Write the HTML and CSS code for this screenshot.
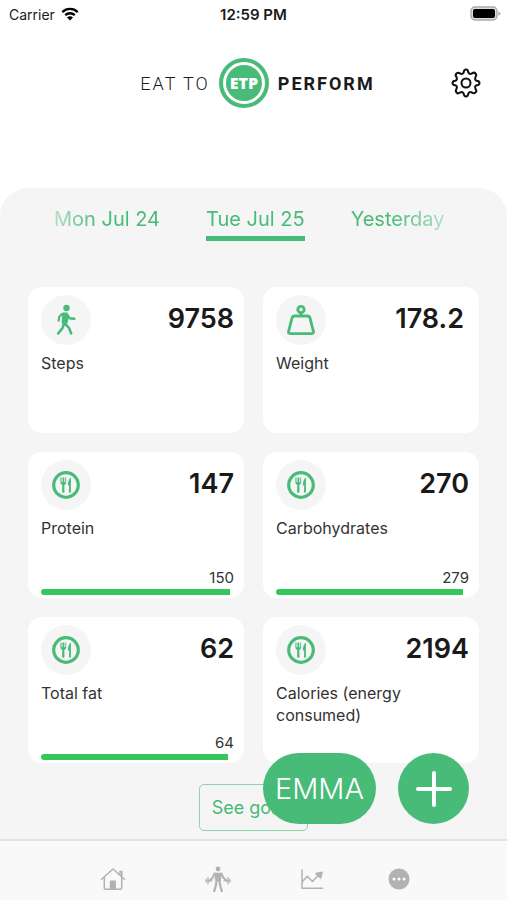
FILE: index.html
```html
<!DOCTYPE html>
<html lang="en">
<head>
<meta charset="utf-8">
<meta name="viewport" content="width=device-width, initial-scale=1">
<title>Eat To Perform</title>
<link rel="stylesheet" href="styles.css">
</head>
<body>
<svg class="sprite" aria-hidden="true">
  <symbol id="meal" viewBox="0 0 28 28">
    <circle cx="14" cy="14" r="12.3" fill="none" stroke="currentColor" stroke-width="3.2"/>
    <path d="M8.400 6.500v5q0 1.800 1.900 2.400L10.100 20.500q0 1.200 1.200 1.200t1.200-1.200l-.2-6.600q1.900-.6 1.900-2.400v-5h-.9v4.700h-1V6.500h-1.800v4.700h-1V6.500z" fill="currentColor"/>
    <path d="M18.900 6.500q-3 2.300-3 7.700l1.300.6-.3 5.700q0 1.200 1 1.200t1-1.200z" fill="currentColor"/>
  </symbol>
</svg>

<div class="status">
  <span class="carrier">Carrier
    <svg width="18" height="14" viewBox="0 0 18 14" aria-hidden="true">
      <path d="M9 13.6 6 10.5a4.2 4.2 0 0 1 6 0z"/>
      <path d="M4.2 8.2a6.9 6.9 0 0 1 9.6 0M1.3 5.1a11 11 0 0 1 15.4 0" fill="none" stroke="#000" stroke-width="2.3"/>
    </svg>
  </span>
  <time class="clock">12:59 PM</time>
  <svg class="battery" width="31" height="16" viewBox="0 0 31 16" aria-hidden="true">
    <rect x="1" y="1" width="26" height="13" rx="4" fill="#ddd" stroke="#aaa" stroke-width="1.4"/>
    <rect x="3" y="3" width="22" height="9" rx="2"/>
    <path d="M28.4 5.4q2 .7 2 2.2t-2 2.2z" fill="#aaa"/>
  </svg>
</div>

<header class="header">
  <h1 class="brand">
    <span class="brand-light">EAT TO</span>
    <span class="brand-ring"><span class="brand-disc">ETP</span></span>
    <span class="brand-bold">PERFORM</span>
  </h1>
  <button class="settings" type="button" aria-label="Settings">
    <svg width="30" height="30" viewBox="0 0 30 30" fill="none" stroke="#111" stroke-width="2" stroke-linejoin="round" aria-hidden="true">
      <circle cx="15" cy="15" r="4.5"/>
      <path d="M12.7 4.3Q13 1.5 15 1.5T17.3 4.3Q18.2 6.7 20.9 5.5Q23.1 3.8 24.5 5.5T24.5 9.1Q23.3 11.8 25.7 12.7Q28.5 13 28.5 15T25.7 17.3Q23.3 18.2 24.5 20.9Q26.2 23.1 24.5 24.5T20.9 24.5Q18.2 23.3 17.3 25.7Q17 28.5 15 28.5T12.7 25.7Q11.8 23.3 9.1 24.5Q6.9 26.2 5.5 24.5T5.5 20.9Q6.7 18.2 4.3 17.3Q1.5 17 1.5 15T4.3 12.7Q6.7 11.8 5.5 9.1Q3.8 6.9 5.5 5.5T9.1 5.5Q11.8 6.7 12.7 4.3Z"/>
    </svg>
  </button>
</header>

<main class="panel">
  <div class="days">
    <button class="day" type="button">Mon Jul 24</button>
    <button class="day day-active" type="button" aria-current="date">Tue Jul 25</button>
    <button class="day" type="button">Yesterday</button>
  </div>

  <div class="cards">
    <section class="card">
      <div class="card-top">
        <span class="badge">
          <svg width="22" height="32" viewBox="0 0 22 32" fill="none" stroke="currentColor" stroke-linecap="round" stroke-linejoin="round" aria-hidden="true">
            <circle cx="11.500" cy="4" r="3.200" fill="currentColor" stroke="none"/>
            <path d="M8.200 9.500h3.800l.5 4.800-.9 4.500H7.700z" fill="currentColor" stroke-width="2"/>
            <path d="M7.200 9.800 4.300 12.800 3.600 16.600" stroke-width="2.200"/>
            <path d="M12.600 11.200 14.600 14.300 19.400 14.800" stroke-width="2.400"/>
            <path d="M8.800 20 7.400 24.200 3.200 29.400M10.500 20 14 24 16.200 29.400" stroke-width="2.600"/>
          </svg>
        </span>
        <strong class="value">9758</strong>
      </div>
      <h2 class="label">Steps</h2>
    </section>

    <section class="card">
      <div class="card-top">
        <span class="badge">
          <svg width="28" height="32" viewBox="0 0 28 32" fill="none" stroke="currentColor" stroke-width="2.8" stroke-linejoin="round" aria-hidden="true">
            <circle cx="14" cy="5.600" r="3.200"/>
            <path d="M14 9v3M7.200 12h13.600q1.700 0 2.100 1.600l3.500 13.800q.5 2.200-1.600 2.200H3.200q-2.100 0-1.600-2.200l3.500-13.800Q5.500 12 7.200 12z"/>
          </svg>
        </span>
        <strong class="value value-decimal">178.2</strong>
      </div>
      <h2 class="label">Weight</h2>
    </section>

    <section class="card">
      <div class="card-top">
        <span class="badge"><svg width="28" height="28" aria-hidden="true"><use href="#meal"/></svg></span>
        <strong class="value">147</strong>
      </div>
      <h2 class="label">Protein</h2>
      <div class="goal">
        <span>150</span>
        <div class="track"><div class="bar" style="width: 98%"></div></div>
      </div>
    </section>

    <section class="card">
      <div class="card-top">
        <span class="badge"><svg width="28" height="28" aria-hidden="true"><use href="#meal"/></svg></span>
        <strong class="value">270</strong>
      </div>
      <h2 class="label">Carbohydrates</h2>
      <div class="goal">
        <span>279</span>
        <div class="track"><div class="bar" style="width: 97%"></div></div>
      </div>
    </section>

    <section class="card">
      <div class="card-top">
        <span class="badge"><svg width="28" height="28" aria-hidden="true"><use href="#meal"/></svg></span>
        <strong class="value">62</strong>
      </div>
      <h2 class="label">Total fat</h2>
      <div class="goal">
        <span>64</span>
        <div class="track"><div class="bar" style="width: 97%"></div></div>
      </div>
    </section>

    <section class="card">
      <div class="card-top">
        <span class="badge"><svg width="28" height="28" aria-hidden="true"><use href="#meal"/></svg></span>
        <strong class="value">2194</strong>
      </div>
      <h2 class="label">Calories (energy consumed)</h2>
    </section>
  </div>

  <button class="goals" type="button">See goals</button>
</main>

<div class="floating">
  <button class="fab fab-wide" type="button">EMMA</button>
  <button class="fab" type="button" aria-label="Add">
    <svg width="38" height="38" viewBox="0 0 38 38" stroke="#fff" stroke-width="4" stroke-linecap="round" aria-hidden="true"><path d="M19 3v32M3 19h32"/></svg>
  </button>
</div>

<nav class="nav">
  <a href="#home" aria-label="Home">
    <svg width="26" height="24" viewBox="0 0 26 24" fill="none" stroke="currentColor" stroke-width="1.5" stroke-linejoin="round" stroke-linecap="round" aria-hidden="true">
      <path d="M1.500 12.200 13 2l11.500 10.200M4.300 10.500V21.300q0 .9.900.9H20.800q.9 0 .9-.9V10.500M20 7.500V4.500h1.800v5"/>
      <path d="M10.500 22v-7.700h4.700V22z" fill="currentColor"/>
    </svg>
  </a>
  <a href="#training" aria-label="Training">
    <svg width="26" height="26" viewBox="0 0 26 26" fill="none" stroke="currentColor" stroke-linecap="round" stroke-linejoin="round" aria-hidden="true">
      <circle cx="13" cy="3" r="2.400" fill="currentColor" stroke="none"/>
      <path d="M10 7.500h6l-.9 7.500h-4.200z" fill="currentColor" stroke-width="1.500"/>
      <path d="M9.500 7.500 7.500 12 4.500 14.500M16.500 7.500 18.500 12 21.500 14.500" stroke-width="2"/>
      <path d="M11.300 16.500 10.600 20.500 9.200 25M14.700 16.500 15.400 20.500 16.800 25" stroke-width="2.300"/>
      <path d="M3 11.500v6.500M1 13.500v2.500M23 11.500v6.500M25 13.500v2.500M1 14.800h6M19 14.800h6" stroke-width="1.300"/>
    </svg>
  </a>
  <a href="#trends" aria-label="Trends">
    <svg width="24" height="22" viewBox="0 0 24 22" fill="none" stroke="currentColor" stroke-width="1.500" stroke-linecap="round" stroke-linejoin="round" aria-hidden="true">
      <path d="M2 2v18.300h20.500M2.500 13.500 7.300 8.300l5.200 5.200 6-6.500"/>
      <path d="M16 5.600 22 4.200 20.600 10z" fill="currentColor"/>
    </svg>
  </a>
  <a href="#more" aria-label="More">
    <svg width="22" height="22" viewBox="0 0 22 22" fill="currentColor" aria-hidden="true">
      <circle cx="11" cy="11" r="10.500"/>
      <g fill="#fff"><circle cx="6" cy="11" r="1.500"/><circle cx="11" cy="11" r="1.500"/><circle cx="16" cy="11" r="1.500"/></g>
    </svg>
  </a>
</nav>
</body>
</html>
```
FILE: styles.css
```css
:root {
  --green: #48bb78;
  --surface: #f5f5f5;
}

* { box-sizing: border-box; }

body {
  margin: 0;
  min-height: 100vh;
  display: flex;
  flex-direction: column;
  background: #fff;
  color: #1a1a1a;
  font-family: Inter, "Liberation Sans", sans-serif;
}

button {
  margin: 0;
  padding: 0;
  border: 0;
  background: none;
  font: inherit;
  color: inherit;
  cursor: pointer;
}

svg { display: block; }

.sprite {
  position: absolute;
  width: 0;
  height: 0;
}

.status {
  display: grid;
  grid-template-columns: 1fr auto 1fr;
  align-items: center;
  height: 28px;
  padding: 0 6px;
  font-size: 14px;
}

.carrier {
  display: flex;
  align-items: center;
  gap: 6px;
  padding-left: 3px;
}

.clock {
  font-size: 15px;
  font-weight: 600;
}

.battery { justify-self: end; }

.header {
  display: grid;
  grid-template-columns: 1fr auto 1fr;
  align-items: center;
  height: 160px;
  padding: 0 26px 50px 34px;
}

.brand {
  grid-column: 2;
  display: flex;
  align-items: center;
  gap: 9px;
  margin: 0;
  font-family: Roboto, sans-serif;
  font-size: 18px;
  font-weight: 300;
}

.brand-light { letter-spacing: 2px; }

.brand-bold {
  font-weight: 700;
  letter-spacing: 2px;
}

.brand-ring {
  display: grid;
  place-items: center;
  width: 50px;
  height: 50px;
  border: 4px solid var(--green);
  border-radius: 50%;
}

.brand-disc {
  display: grid;
  place-items: center;
  width: 36px;
  height: 36px;
  border-radius: 50%;
  background: var(--green);
  color: #fff;
  font-family: "Open Sans", sans-serif;
  font-size: 16px;
  font-weight: 800;
}

.settings { justify-self: end; }

.panel {
  flex: 1;
  display: flex;
  flex-direction: column;
  padding: 18px 28px 69px;
  border-radius: 28px 28px 0 0;
  background: var(--surface);
}

.days {
  display: flex;
  gap: 46px;
  padding: 0 36px 0 26px;
  margin-bottom: 46px;
  color: var(--green);
  font-size: 20px;
  line-height: 26px;
  white-space: nowrap;
  mask-image: linear-gradient(90deg, transparent, #000 70px, #000 calc(100% - 90px), transparent);
}

.day {
  padding-bottom: 4px;
  border-bottom: 5px solid transparent;
}

.day-active { border-bottom-color: var(--green); }

.cards {
  display: grid;
  grid-template-columns: 1fr 1fr;
  gap: 19px;
}

.card {
  display: flex;
  flex-direction: column;
  min-height: 146px;
  padding: 8px 10px 3px 13px;
  border-radius: 14px;
  background: #fff;
}

.card-top {
  display: flex;
  justify-content: space-between;
  align-items: flex-start;
}

.badge {
  display: grid;
  place-items: center;
  width: 50px;
  height: 50px;
  border-radius: 50%;
  background: var(--surface);
  color: var(--green);
}

.value {
  font-size: 27px;
  font-weight: 600;
  line-height: 48px;
}

.value-decimal { padding-right: 5px; }

.label {
  margin: 7px 0 0;
  color: #333;
  font-size: 16px;
  font-weight: 400;
  line-height: 22px;
}

.goal {
  display: flex;
  flex-direction: column;
  gap: 2px;
  margin-top: auto;
  color: #333;
  font-size: 15px;
  line-height: 18px;
  text-align: right;
}

.bar {
  height: 6px;
  border-radius: 3px 0 0 3px;
  background: #34c759;
}

.goals {
  align-self: center;
  height: 47px;
  margin-top: 21px;
  padding: 0 12px;
  border: 1px solid #8fd3ac;
  border-radius: 5px;
  color: var(--green);
  font-size: 18px;
}

.floating {
  position: fixed;
  right: 38px;
  bottom: 76px;
  display: flex;
  gap: 22px;
}

.fab {
  display: grid;
  place-items: center;
  width: 71px;
  height: 71px;
  border-radius: 36px;
  background: var(--green);
  color: #fff;
}

.fab-wide {
  width: auto;
  padding: 0 12px;
  font-size: 29px;
  font-weight: 300;
}

.nav {
  position: fixed;
  right: 0;
  bottom: 0;
  left: 0;
  display: grid;
  grid-template-columns: 110fr 100fr 88fr 86fr;
  place-items: center;
  height: 61px;
  padding: 17px 65px 0 58px;
  border-top: 2px solid #e2e2e2;
  background: #f9f9f9;
}

.nav a { color: #b2b2b2; }
```
